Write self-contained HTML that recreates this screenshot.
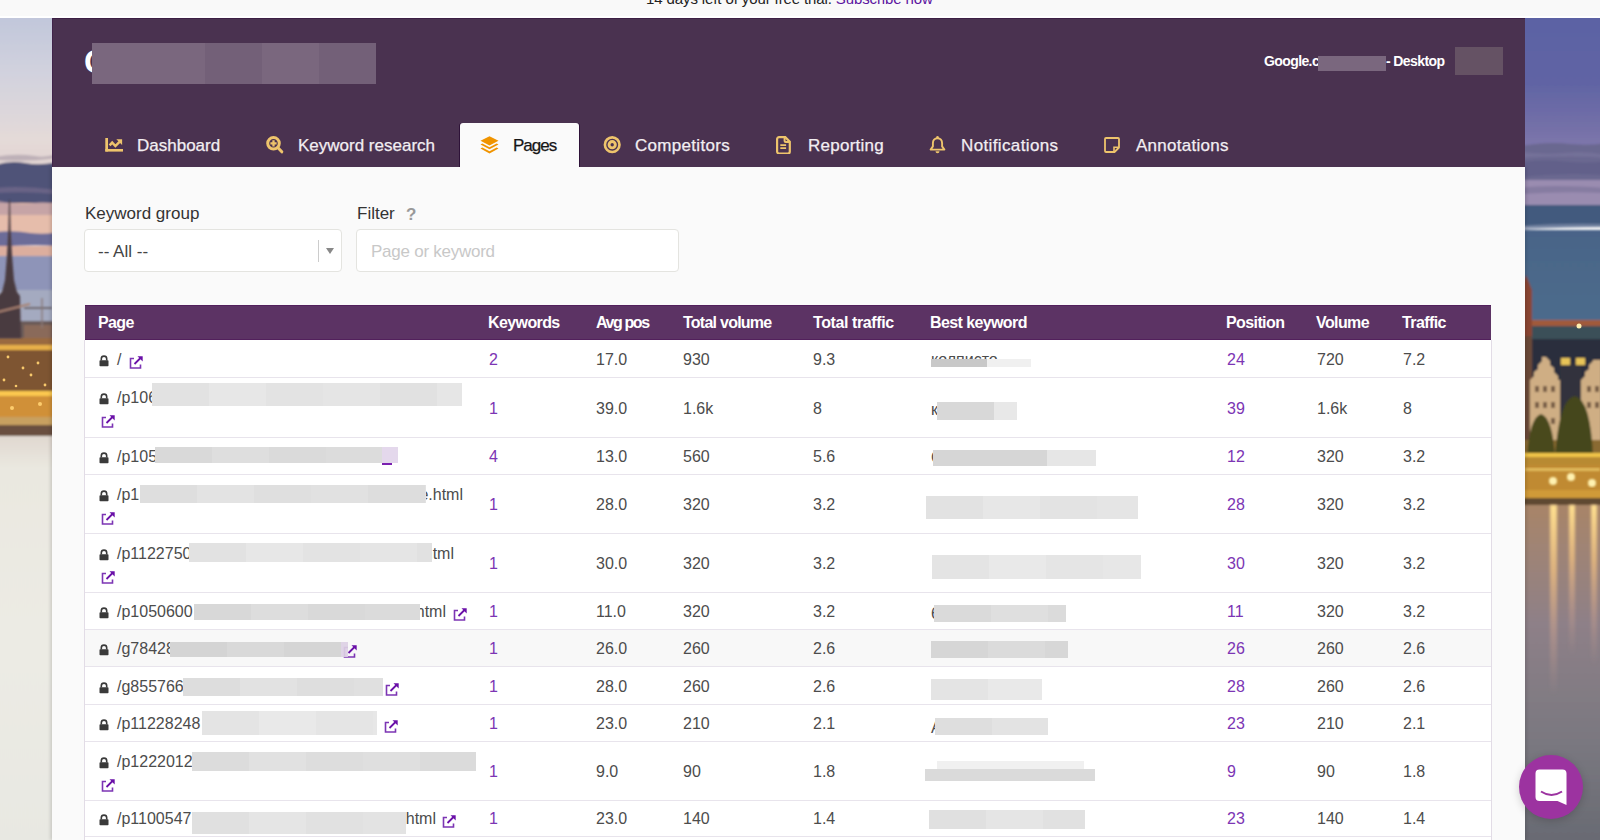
<!DOCTYPE html>
<html><head><meta charset="utf-8"><title>Pages</title>
<style>
html,body{margin:0;padding:0;}
body{width:1600px;height:840px;overflow:hidden;position:relative;background:#fafafa;font-family:"Liberation Sans", sans-serif;}
.t{position:absolute;white-space:nowrap;}
.r{position:absolute;}
</style></head><body>
<svg class="r" style="left:0;top:0" width="52" height="840" viewBox="0 0 52 840">
<defs>
<linearGradient id="lsky" x1="0" y1="0" x2="0" y2="1">
<stop offset="0" stop-color="#bcc4da"/><stop offset="0.45" stop-color="#d2d2de"/><stop offset="0.85" stop-color="#e4dad8"/><stop offset="1" stop-color="#e2d4d2"/>
</linearGradient>
<linearGradient id="lwater" x1="0" y1="0" x2="0" y2="1">
<stop offset="0" stop-color="#e0d8d0"/><stop offset="0.08" stop-color="#eae8e0"/><stop offset="0.5" stop-color="#ecebe4"/><stop offset="1" stop-color="#e8e8e2"/>
</linearGradient>
<filter id="lb" x="-20%" y="-5%" width="140%" height="110%"><feGaussianBlur stdDeviation="1.2"/></filter>
</defs>
<g filter="url(#lb)">
<rect x="-5" y="0" width="62" height="165" fill="url(#lsky)"/>
<path d="M-5 157 q20 -4 40 -1 q10 2 22 -2 v4 q-30 4 -62 2z" fill="#9a8c9c" opacity=".5"/>
<path d="M-5 165 q15 -5 30 -2 q15 3 32 -1 V205 q-20 4 -35 0 q-15 -3 -27 2z" fill="#505278"/>
<path d="M-5 188 q25 -3 62 2 v4 q-30 -3 -62 -1z" fill="#7a7090" opacity=".6"/>
<rect x="-5" y="203" width="62" height="32" fill="#e6bdab"/>
<path d="M-5 200 q20 6 40 3 q12 -2 22 2 v10 h-62z" fill="#b89aa4" opacity=".7"/>
<path d="M-5 232 q20 -2 35 1 q15 2 27 -1 V246 q-25 -2 -62 1z" fill="#6c6c98"/>
<rect x="-5" y="246" width="62" height="11" fill="#dcae9e"/>
<rect x="-5" y="256" width="62" height="66" fill="#8e94b8"/>
<rect x="-5" y="290" width="62" height="32" fill="#a4aac0"/>
<rect x="-5" y="321" width="62" height="18" fill="#6a5a58"/>
<rect x="24" y="325" width="28" height="14" fill="#8a6a5a"/>
<path d="M24 308 h28" stroke="#6a5e60" stroke-width="2"/>
<path d="M42 298 v30" stroke="#8a7a78" stroke-width="1.5"/>
<rect x="-5" y="338" width="62" height="8" fill="#9a6a40"/>
<rect x="-5" y="345" width="62" height="6" fill="#e8b048"/>
<rect x="-5" y="350" width="62" height="42" fill="#7e5432"/>
<rect x="-5" y="391" width="62" height="6" fill="#fcc850"/>
<rect x="-5" y="396" width="62" height="22" fill="#d09038"/>
<rect x="-5" y="417" width="62" height="9" fill="#c8a060"/>
<rect x="-5" y="425" width="62" height="12" fill="#6a5040"/>
<rect x="-5" y="436" width="62" height="410" fill="url(#lwater)"/>
</g>
<g filter="url(#lb)" opacity="1">
<path d="M9 200 L10 200 L10.6 230 L12 255 L14 280 L17 292 L20 296 L21 338 L-2 338 L-2 296 L2 292 L5 280 L7 255 L8.4 230z" fill="#4a3a40"/>
<path d="M-2 312 L30 304" stroke="#a88070" stroke-width="2"/>
</g>
<g fill="#ffd070" opacity=".95">
<circle cx="8" cy="357" r="1.4"/><circle cx="23" cy="368" r="1.4"/><circle cx="38" cy="363" r="1.4"/><circle cx="31" cy="375" r="1.4"/><circle cx="4" cy="380" r="1.4"/><circle cx="45" cy="385" r="1.4"/><circle cx="16" cy="386" r="1.3"/><circle cx="40" cy="404" r="2"/><circle cx="12" cy="408" r="2"/>
</g>
</svg>
<svg class="r" style="left:1525px;top:0" width="75" height="840" viewBox="0 0 75 840">
<defs>
<linearGradient id="rsky" x1="0" y1="0" x2="0" y2="1">
<stop offset="0" stop-color="#5a62a4"/><stop offset="0.55" stop-color="#6064a4"/><stop offset="0.85" stop-color="#7470a8"/><stop offset="1" stop-color="#8078ac"/>
</linearGradient>
<linearGradient id="rteal" x1="0" y1="0" x2="0" y2="1">
<stop offset="0" stop-color="#4a6488"/><stop offset="1" stop-color="#4c6c8c"/>
</linearGradient>
<linearGradient id="rwater" x1="0" y1="0" x2="0" y2="1">
<stop offset="0" stop-color="#a88468"/><stop offset="0.12" stop-color="#a08474"/><stop offset="0.35" stop-color="#8e8088"/><stop offset="0.7" stop-color="#7a7880"/><stop offset="1" stop-color="#686a72"/>
</linearGradient>
<linearGradient id="streak" x1="0" y1="0" x2="0" y2="1">
<stop offset="0" stop-color="#ffe090" stop-opacity="1"/><stop offset="0.35" stop-color="#f0c080" stop-opacity=".75"/><stop offset="0.7" stop-color="#d8a890" stop-opacity=".35"/><stop offset="1" stop-color="#c8a090" stop-opacity="0"/>
</linearGradient>
<filter id="rb" x="-20%" y="-5%" width="140%" height="110%"><feGaussianBlur stdDeviation="1.2"/></filter>
<filter id="rb2" x="-50%" y="-5%" width="200%" height="110%"><feGaussianBlur stdDeviation="1.8"/></filter>
</defs>
<g filter="url(#rb)">
<rect x="-5" y="0" width="85" height="150" fill="url(#rsky)"/>
<path d="M-5 146 q30 -5 50 -2 q20 2 35 -1 V182 h-85z" fill="#6a6890"/>
<path d="M-5 152 q25 3 45 1 q20 -2 40 2 v3 q-30 -3 -85 0z" fill="#7c78a0" opacity=".6"/>
<path d="M-5 162 q30 -3 50 0 q20 2 35 -1 v14 q-40 -3 -85 2z" fill="#605e88" opacity=".8"/>
<rect x="-5" y="180" width="85" height="26" fill="#9a8cb0"/>
<path d="M-5 188 q30 -4 85 0 v5 q-40 -2 -85 1z" fill="#7a7098" opacity=".6"/>
<rect x="-5" y="205" width="85" height="22" fill="#425a7e"/>
<path d="M-5 226 q40 -3 85 -2 v3 q-40 0 -85 3z" fill="#7a8aa8" opacity=".8"/>
<rect x="-5" y="230" width="85" height="92" fill="url(#rteal)"/>
<rect x="-5" y="320" width="85" height="7" fill="#a05a3a"/>
<rect x="-5" y="326" width="85" height="14" fill="#3a5058"/>
<rect x="-5" y="339" width="85" height="105" fill="#2a2e3c"/>
<path d="M-5 336 V290 l6 -15 l6 15 V336z" fill="#8a4430"/>
<rect x="-5" y="336" width="12" height="110" fill="#6a4838"/>
<path d="M5 440 V380 l4 -4 V372 l4 -3 V365 l4 -4 V357 h4 l4 4 V365 l4 3 V372 l4 4 V380 l2 0 V440z" fill="#cfae84"/>
<path d="M35 440 V362 h21 V440z" fill="#30323e"/>
<path d="M56 440 V380 l4 -4 V372 l4 -3 V365 l4 -4 V360 h8 V440z" fill="#cfae84"/>
<rect x="36" y="358" width="9" height="7" fill="#e8c458"/>
<rect x="51" y="358" width="9" height="7" fill="#e8c458"/>
<g fill="#5a4030" opacity=".75">
<rect x="10" y="386" width="4" height="6"/><rect x="18" y="386" width="4" height="6"/><rect x="26" y="386" width="4" height="6"/>
<rect x="10" y="402" width="4" height="6"/><rect x="18" y="402" width="4" height="6"/><rect x="26" y="402" width="4" height="6"/>
<rect x="10" y="418" width="4" height="6"/><rect x="18" y="418" width="4" height="6"/><rect x="26" y="418" width="4" height="6"/>
<rect x="62" y="386" width="4" height="6"/><rect x="70" y="386" width="4" height="6"/>
<rect x="62" y="402" width="4" height="6"/><rect x="70" y="402" width="4" height="6"/>
</g>
<rect x="-5" y="440" width="85" height="16" fill="#8a6a30"/>
<path d="M2 458 q2 -40 14 -44 q12 4 14 44z" fill="#4a4a1e"/>
<path d="M30 458 q4 -60 20 -62 q16 4 18 62z" fill="#44461c"/>
<rect x="-5" y="453" width="85" height="4" fill="#f0c448"/>
<rect x="-5" y="457" width="85" height="8" fill="#b88a30"/>
<rect x="-5" y="465" width="85" height="26" fill="#c08a30"/>
<rect x="-5" y="490" width="85" height="8" fill="#d09a38"/>
<rect x="-5" y="498" width="85" height="7" fill="#5e4a30"/>
<rect x="-5" y="505" width="85" height="340" fill="url(#rwater)"/>
</g>
<g fill="#fff2b0" filter="url(#rb)">
<circle cx="28" cy="481" r="4"/><circle cx="46" cy="477" r="4"/><circle cx="67" cy="483" r="4"/>
<rect x="0" y="468" width="75" height="3" fill="#f0d070" opacity=".7"/>
</g>
<g filter="url(#rb2)">
<rect x="25" y="505" width="7" height="190" fill="url(#streak)"/>
<rect x="44" y="505" width="6" height="150" fill="url(#streak)"/>
<rect x="66" y="505" width="6" height="160" fill="url(#streak)"/>

</g>
<circle cx="54" cy="326" r="2.5" fill="#fff0b0"/>

</svg>
<div class="r" style="left:0px;top:0px;width:1600px;height:18px;background:#f9f9f9;"></div>
<div class="r" style="left:0px;top:16px;width:1600px;height:2px;background:#ffffff;"></div>
<div class="t" style="left:646px;top:-9.00px;font-size:15px;line-height:15px;color:#222;font-weight:400;letter-spacing:-0.11px;">14 days left of your free trial. <span style="color:#5c14a0">Subscribe now</span></div>
<div class="r" style="left:52px;top:167px;width:1473px;height:673px;background:#fafafa;box-shadow:-2px 0 3px rgba(0,0,0,.12),2px 0 3px rgba(0,0,0,.12)"></div>
<div class="r" style="left:52px;top:18px;width:1473px;height:149px;background:#4a3250;"></div>
<div class="r" style="left:52px;top:18px;width:1473px;height:1px;background:#3c1f44;"></div>
<div class="r" style="left:52px;top:18px;width:1px;height:149px;background:#40234a;"></div>
<div class="t" style="left:84px;top:45.00px;font-size:33px;line-height:33px;color:#ffffff;font-weight:700;letter-spacing:0px;">C</div>
<div class="r" style="left:92px;top:43px;width:113px;height:41px;background:#7a677e;"></div>
<div class="r" style="left:205px;top:43px;width:57px;height:41px;background:#736078;"></div>
<div class="r" style="left:262px;top:43px;width:57px;height:41px;background:#7a677e;"></div>
<div class="r" style="left:319px;top:43px;width:57px;height:41px;background:#736078;"></div>
<div class="t" style="left:1264px;top:54.00px;font-size:14px;line-height:14px;color:#ffffff;font-weight:700;letter-spacing:-0.6px;">Google.c</div>
<div class="r" style="left:1318px;top:56px;width:68px;height:15px;background:#7a677e;"></div>
<div class="t" style="left:1386px;top:54.00px;font-size:14px;line-height:14px;color:#ffffff;font-weight:700;letter-spacing:-0.6px;">- Desktop</div>
<div class="r" style="left:1455px;top:47px;width:48px;height:28px;background:#655264;"></div>
<div class="r" style="left:460px;top:123px;width:119px;height:44px;background:#fafafa;border-radius:3px 3px 0 0;box-shadow:-1px 0 0 #2e1238,1px 0 0 #2e1238"></div>
<svg class="r" style="left:105px;top:138px" width="19" height="14" viewBox="0 0 19 14"><rect x="0.3" y="0" width="2.7" height="13.5" fill="#eec46c"/><rect x="0.3" y="11" width="17.7" height="2.6" fill="#eec46c"/><path d="M4.6 7.4L7.2 4.6 10.4 8 14.5 3.8" fill="none" stroke="#eec46c" stroke-width="2.5"/><path d="M11.3 1.2h5.8v5.8z" fill="#eec46c"/></svg>
<div class="t" style="left:137px;top:137.00px;font-size:17px;line-height:17px;color:#f2eef2;font-weight:400;letter-spacing:0px;-webkit-text-stroke:0.25px currentColor;">Dashboard</div>
<svg class="r" style="left:265px;top:136px" width="20" height="18" viewBox="0 0 20 18"><circle cx="8.5" cy="7.3" r="5.8" fill="none" stroke="#eec46c" stroke-width="3"/><path d="M5.4 7.3h6.2M8.5 4.2v6.2" stroke="#eec46c" stroke-width="2.3"/><path d="M13.2 12l3.6 3.8" stroke="#eec46c" stroke-width="3" stroke-linecap="round"/></svg>
<div class="t" style="left:298px;top:137.00px;font-size:17px;line-height:17px;color:#f2eef2;font-weight:400;letter-spacing:0px;-webkit-text-stroke:0.25px currentColor;">Keyword research</div>
<svg class="r" style="left:480px;top:136px" width="19" height="18" viewBox="0 0 19 18"><path d="M9.5 0.3L18.5 4.8 9.5 9.4 0.5 4.8z" fill="#f09400"/><path d="M2.3 7.6L9.5 11.3 16.7 7.6 18.5 8.6 9.5 13.3 0.5 8.6z" fill="#f09400"/><path d="M2.3 11.6L9.5 15.3 16.7 11.6 18.5 12.6 9.5 17.4 0.5 12.6z" fill="#f09400"/></svg>
<div class="t" style="left:513px;top:137.00px;font-size:17px;line-height:17px;color:#161616;font-weight:400;letter-spacing:-1.0px;-webkit-text-stroke:0.25px currentColor;">Pages</div>
<svg class="r" style="left:603px;top:136px" width="18" height="18" viewBox="0 0 18 18"><circle cx="9.2" cy="8.7" r="7.3" fill="none" stroke="#eec46c" stroke-width="2.6"/><circle cx="9.2" cy="8.7" r="3.15" fill="none" stroke="#eec46c" stroke-width="2.9"/></svg>
<div class="t" style="left:635px;top:137.00px;font-size:17px;line-height:17px;color:#f2eef2;font-weight:400;letter-spacing:0.3px;-webkit-text-stroke:0.25px currentColor;">Competitors</div>
<svg class="r" style="left:776px;top:136px" width="15" height="18" viewBox="0 0 15 18"><path d="M3.1 1.1h6.2l4.5 4.5v10a2 2 0 0 1-2 2H3.1a2 2 0 0 1-2-2V3.1a2 2 0 0 1 2-2z" fill="none" stroke="#eec46c" stroke-width="2.2"/><path d="M8.6 1.5v3.6a1 1 0 0 0 1 1h3.8" fill="none" stroke="#eec46c" stroke-width="2"/><path d="M4.3 9.2h5.8M4.3 12.2h5.8" stroke="#eec46c" stroke-width="1.8"/></svg>
<div class="t" style="left:808px;top:137.00px;font-size:17px;line-height:17px;color:#f2eef2;font-weight:400;letter-spacing:0.25px;-webkit-text-stroke:0.25px currentColor;">Reporting</div>
<svg class="r" style="left:929px;top:136px" width="17" height="18" viewBox="0 0 17 18"><path d="M8.5 2.2c-3 0-4.6 2.4-4.6 5v3.2L1.6 13.6h13.8L13.1 10.4V7.2c0-2.6-1.6-5-4.6-5z" fill="none" stroke="#eec46c" stroke-width="1.9" stroke-linejoin="round"/><circle cx="8.5" cy="1.4" r="1.3" fill="#eec46c"/><path d="M6.5 15.2a2 2 0 0 0 4 0z" fill="#eec46c"/></svg>
<div class="t" style="left:961px;top:137.00px;font-size:17px;line-height:17px;color:#f2eef2;font-weight:400;letter-spacing:0.37px;-webkit-text-stroke:0.25px currentColor;">Notifications</div>
<svg class="r" style="left:1104px;top:137px" width="16" height="16" viewBox="0 0 16 16"><path d="M2 1h12a1 1 0 0 1 1 1v8.5L10.5 15H2a1 1 0 0 1-1-1V2a1 1 0 0 1 1-1z" fill="none" stroke="#eec46c" stroke-width="1.8" stroke-linejoin="round"/><path d="M10 15v-4.8h5" fill="none" stroke="#eec46c" stroke-width="1.6"/></svg>
<div class="t" style="left:1136px;top:137.00px;font-size:17px;line-height:17px;color:#f2eef2;font-weight:400;letter-spacing:0.26px;-webkit-text-stroke:0.25px currentColor;">Annotations</div>
<div class="t" style="left:85px;top:205.00px;font-size:17px;line-height:17px;color:#333;font-weight:400;letter-spacing:0px;">Keyword group</div>
<div class="t" style="left:357px;top:205.00px;font-size:17px;line-height:17px;color:#333;font-weight:400;letter-spacing:0px;">Filter</div>
<div class="t" style="left:406px;top:206.00px;font-size:17px;line-height:17px;color:#999;font-weight:700;letter-spacing:0px;">?</div>
<div class="r" style="left:84px;top:229px;width:256px;height:41px;background:#fff;border:1px solid #e4e4e0;border-radius:4px"></div>
<div class="t" style="left:98px;top:243.00px;font-size:17px;line-height:17px;color:#444;font-weight:400;letter-spacing:0px;">-- All --</div>
<div class="r" style="left:318px;top:240px;width:1px;height:22px;background:#cccccc;"></div>
<svg class="r" style="left:326px;top:248px" width="8" height="6" viewBox="0 0 8 6"><path d="M0 0h8L4 6z" fill="#888"/></svg>
<div class="r" style="left:356px;top:229px;width:321px;height:41px;background:#fff;border:1px solid #e4e4e0;border-radius:4px"></div>
<div class="t" style="left:371px;top:243.00px;font-size:17px;line-height:17px;color:#c8c8c8;font-weight:400;letter-spacing:-0.25px;">Page or keyword</div>
<div class="r" style="left:85px;top:305px;width:1406px;height:35px;background:#5c3364;"></div>
<div class="r" style="left:85px;top:305px;width:1406px;height:1px;background:#52205c;"></div>
<div class="r" style="left:85px;top:339px;width:1406px;height:1px;background:#52205c;"></div>
<div class="t" style="left:98px;top:314.50px;font-size:16px;line-height:16px;color:#ffffff;font-weight:700;letter-spacing:-0.6px;">Page</div>
<div class="t" style="left:488px;top:314.50px;font-size:16px;line-height:16px;color:#ffffff;font-weight:700;letter-spacing:-0.6px;">Keywords</div>
<div class="t" style="left:596px;top:314.50px;font-size:16px;line-height:16px;color:#ffffff;font-weight:700;letter-spacing:-1.4px;">Avg pos</div>
<div class="t" style="left:683px;top:314.50px;font-size:16px;line-height:16px;color:#ffffff;font-weight:700;letter-spacing:-0.75px;">Total volume</div>
<div class="t" style="left:813px;top:314.50px;font-size:16px;line-height:16px;color:#ffffff;font-weight:700;letter-spacing:-0.4px;">Total traffic</div>
<div class="t" style="left:930px;top:314.50px;font-size:16px;line-height:16px;color:#ffffff;font-weight:700;letter-spacing:-0.6px;">Best keyword</div>
<div class="t" style="left:1226px;top:314.50px;font-size:16px;line-height:16px;color:#ffffff;font-weight:700;letter-spacing:-0.6px;">Position</div>
<div class="t" style="left:1316px;top:314.50px;font-size:16px;line-height:16px;color:#ffffff;font-weight:700;letter-spacing:-0.6px;">Volume</div>
<div class="t" style="left:1402px;top:314.50px;font-size:16px;line-height:16px;color:#ffffff;font-weight:700;letter-spacing:-0.6px;">Traffic</div>
<div class="r" style="left:84px;top:340px;width:1px;height:500px;background:#e2dce6;"></div>
<div class="r" style="left:1491px;top:340px;width:1px;height:500px;background:#e2dce6;"></div>
<div class="r" style="left:85px;top:340px;width:1406px;height:500px;background:#ffffff;"></div>
<div class="r" style="left:85px;top:629px;width:1406px;height:37px;background:#f8f8f8;"></div>
<div class="r" style="left:85px;top:377px;width:1406px;height:1px;background:#e8e4ec;"></div>
<div class="r" style="left:85px;top:437px;width:1406px;height:1px;background:#e8e4ec;"></div>
<div class="r" style="left:85px;top:474px;width:1406px;height:1px;background:#e8e4ec;"></div>
<div class="r" style="left:85px;top:533px;width:1406px;height:1px;background:#e8e4ec;"></div>
<div class="r" style="left:85px;top:592px;width:1406px;height:1px;background:#e8e4ec;"></div>
<div class="r" style="left:85px;top:629px;width:1406px;height:1px;background:#e8e4ec;"></div>
<div class="r" style="left:85px;top:666px;width:1406px;height:1px;background:#e8e4ec;"></div>
<div class="r" style="left:85px;top:704px;width:1406px;height:1px;background:#e8e4ec;"></div>
<div class="r" style="left:85px;top:741px;width:1406px;height:1px;background:#e8e4ec;"></div>
<div class="r" style="left:85px;top:800px;width:1406px;height:1px;background:#e8e4ec;"></div>
<div class="r" style="left:85px;top:836px;width:1406px;height:1px;background:#e8e4ec;"></div>
<div class="t" style="left:489px;top:351.50px;font-size:16px;line-height:16px;color:#7c35b4;font-weight:400;letter-spacing:0px;">2</div>
<div class="t" style="left:596px;top:351.50px;font-size:16px;line-height:16px;color:#4c4c4c;font-weight:400;letter-spacing:0px;">17.0</div>
<div class="t" style="left:683px;top:351.50px;font-size:16px;line-height:16px;color:#4c4c4c;font-weight:400;letter-spacing:0px;">930</div>
<div class="t" style="left:813px;top:351.50px;font-size:16px;line-height:16px;color:#4c4c4c;font-weight:400;letter-spacing:0px;">9.3</div>
<div class="t" style="left:1227px;top:351.50px;font-size:16px;line-height:16px;color:#7c35b4;font-weight:400;letter-spacing:0px;">24</div>
<div class="t" style="left:1317px;top:351.50px;font-size:16px;line-height:16px;color:#4c4c4c;font-weight:400;letter-spacing:0px;">720</div>
<div class="t" style="left:1403px;top:351.50px;font-size:16px;line-height:16px;color:#4c4c4c;font-weight:400;letter-spacing:0px;">7.2</div>
<div class="t" style="left:489px;top:400.50px;font-size:16px;line-height:16px;color:#7c35b4;font-weight:400;letter-spacing:0px;">1</div>
<div class="t" style="left:596px;top:400.50px;font-size:16px;line-height:16px;color:#4c4c4c;font-weight:400;letter-spacing:0px;">39.0</div>
<div class="t" style="left:683px;top:400.50px;font-size:16px;line-height:16px;color:#4c4c4c;font-weight:400;letter-spacing:0px;">1.6k</div>
<div class="t" style="left:813px;top:400.50px;font-size:16px;line-height:16px;color:#4c4c4c;font-weight:400;letter-spacing:0px;">8</div>
<div class="t" style="left:1227px;top:400.50px;font-size:16px;line-height:16px;color:#7c35b4;font-weight:400;letter-spacing:0px;">39</div>
<div class="t" style="left:1317px;top:400.50px;font-size:16px;line-height:16px;color:#4c4c4c;font-weight:400;letter-spacing:0px;">1.6k</div>
<div class="t" style="left:1403px;top:400.50px;font-size:16px;line-height:16px;color:#4c4c4c;font-weight:400;letter-spacing:0px;">8</div>
<div class="t" style="left:489px;top:448.50px;font-size:16px;line-height:16px;color:#7c35b4;font-weight:400;letter-spacing:0px;">4</div>
<div class="t" style="left:596px;top:448.50px;font-size:16px;line-height:16px;color:#4c4c4c;font-weight:400;letter-spacing:0px;">13.0</div>
<div class="t" style="left:683px;top:448.50px;font-size:16px;line-height:16px;color:#4c4c4c;font-weight:400;letter-spacing:0px;">560</div>
<div class="t" style="left:813px;top:448.50px;font-size:16px;line-height:16px;color:#4c4c4c;font-weight:400;letter-spacing:0px;">5.6</div>
<div class="t" style="left:1227px;top:448.50px;font-size:16px;line-height:16px;color:#7c35b4;font-weight:400;letter-spacing:0px;">12</div>
<div class="t" style="left:1317px;top:448.50px;font-size:16px;line-height:16px;color:#4c4c4c;font-weight:400;letter-spacing:0px;">320</div>
<div class="t" style="left:1403px;top:448.50px;font-size:16px;line-height:16px;color:#4c4c4c;font-weight:400;letter-spacing:0px;">3.2</div>
<div class="t" style="left:489px;top:496.50px;font-size:16px;line-height:16px;color:#7c35b4;font-weight:400;letter-spacing:0px;">1</div>
<div class="t" style="left:596px;top:496.50px;font-size:16px;line-height:16px;color:#4c4c4c;font-weight:400;letter-spacing:0px;">28.0</div>
<div class="t" style="left:683px;top:496.50px;font-size:16px;line-height:16px;color:#4c4c4c;font-weight:400;letter-spacing:0px;">320</div>
<div class="t" style="left:813px;top:496.50px;font-size:16px;line-height:16px;color:#4c4c4c;font-weight:400;letter-spacing:0px;">3.2</div>
<div class="t" style="left:1227px;top:496.50px;font-size:16px;line-height:16px;color:#7c35b4;font-weight:400;letter-spacing:0px;">28</div>
<div class="t" style="left:1317px;top:496.50px;font-size:16px;line-height:16px;color:#4c4c4c;font-weight:400;letter-spacing:0px;">320</div>
<div class="t" style="left:1403px;top:496.50px;font-size:16px;line-height:16px;color:#4c4c4c;font-weight:400;letter-spacing:0px;">3.2</div>
<div class="t" style="left:489px;top:555.50px;font-size:16px;line-height:16px;color:#7c35b4;font-weight:400;letter-spacing:0px;">1</div>
<div class="t" style="left:596px;top:555.50px;font-size:16px;line-height:16px;color:#4c4c4c;font-weight:400;letter-spacing:0px;">30.0</div>
<div class="t" style="left:683px;top:555.50px;font-size:16px;line-height:16px;color:#4c4c4c;font-weight:400;letter-spacing:0px;">320</div>
<div class="t" style="left:813px;top:555.50px;font-size:16px;line-height:16px;color:#4c4c4c;font-weight:400;letter-spacing:0px;">3.2</div>
<div class="t" style="left:1227px;top:555.50px;font-size:16px;line-height:16px;color:#7c35b4;font-weight:400;letter-spacing:0px;">30</div>
<div class="t" style="left:1317px;top:555.50px;font-size:16px;line-height:16px;color:#4c4c4c;font-weight:400;letter-spacing:0px;">320</div>
<div class="t" style="left:1403px;top:555.50px;font-size:16px;line-height:16px;color:#4c4c4c;font-weight:400;letter-spacing:0px;">3.2</div>
<div class="t" style="left:489px;top:603.50px;font-size:16px;line-height:16px;color:#7c35b4;font-weight:400;letter-spacing:0px;">1</div>
<div class="t" style="left:596px;top:603.50px;font-size:16px;line-height:16px;color:#4c4c4c;font-weight:400;letter-spacing:0px;">11.0</div>
<div class="t" style="left:683px;top:603.50px;font-size:16px;line-height:16px;color:#4c4c4c;font-weight:400;letter-spacing:0px;">320</div>
<div class="t" style="left:813px;top:603.50px;font-size:16px;line-height:16px;color:#4c4c4c;font-weight:400;letter-spacing:0px;">3.2</div>
<div class="t" style="left:1227px;top:603.50px;font-size:16px;line-height:16px;color:#7c35b4;font-weight:400;letter-spacing:0px;">11</div>
<div class="t" style="left:1317px;top:603.50px;font-size:16px;line-height:16px;color:#4c4c4c;font-weight:400;letter-spacing:0px;">320</div>
<div class="t" style="left:1403px;top:603.50px;font-size:16px;line-height:16px;color:#4c4c4c;font-weight:400;letter-spacing:0px;">3.2</div>
<div class="t" style="left:489px;top:640.50px;font-size:16px;line-height:16px;color:#7c35b4;font-weight:400;letter-spacing:0px;">1</div>
<div class="t" style="left:596px;top:640.50px;font-size:16px;line-height:16px;color:#4c4c4c;font-weight:400;letter-spacing:0px;">26.0</div>
<div class="t" style="left:683px;top:640.50px;font-size:16px;line-height:16px;color:#4c4c4c;font-weight:400;letter-spacing:0px;">260</div>
<div class="t" style="left:813px;top:640.50px;font-size:16px;line-height:16px;color:#4c4c4c;font-weight:400;letter-spacing:0px;">2.6</div>
<div class="t" style="left:1227px;top:640.50px;font-size:16px;line-height:16px;color:#7c35b4;font-weight:400;letter-spacing:0px;">26</div>
<div class="t" style="left:1317px;top:640.50px;font-size:16px;line-height:16px;color:#4c4c4c;font-weight:400;letter-spacing:0px;">260</div>
<div class="t" style="left:1403px;top:640.50px;font-size:16px;line-height:16px;color:#4c4c4c;font-weight:400;letter-spacing:0px;">2.6</div>
<div class="t" style="left:489px;top:678.50px;font-size:16px;line-height:16px;color:#7c35b4;font-weight:400;letter-spacing:0px;">1</div>
<div class="t" style="left:596px;top:678.50px;font-size:16px;line-height:16px;color:#4c4c4c;font-weight:400;letter-spacing:0px;">28.0</div>
<div class="t" style="left:683px;top:678.50px;font-size:16px;line-height:16px;color:#4c4c4c;font-weight:400;letter-spacing:0px;">260</div>
<div class="t" style="left:813px;top:678.50px;font-size:16px;line-height:16px;color:#4c4c4c;font-weight:400;letter-spacing:0px;">2.6</div>
<div class="t" style="left:1227px;top:678.50px;font-size:16px;line-height:16px;color:#7c35b4;font-weight:400;letter-spacing:0px;">28</div>
<div class="t" style="left:1317px;top:678.50px;font-size:16px;line-height:16px;color:#4c4c4c;font-weight:400;letter-spacing:0px;">260</div>
<div class="t" style="left:1403px;top:678.50px;font-size:16px;line-height:16px;color:#4c4c4c;font-weight:400;letter-spacing:0px;">2.6</div>
<div class="t" style="left:489px;top:715.50px;font-size:16px;line-height:16px;color:#7c35b4;font-weight:400;letter-spacing:0px;">1</div>
<div class="t" style="left:596px;top:715.50px;font-size:16px;line-height:16px;color:#4c4c4c;font-weight:400;letter-spacing:0px;">23.0</div>
<div class="t" style="left:683px;top:715.50px;font-size:16px;line-height:16px;color:#4c4c4c;font-weight:400;letter-spacing:0px;">210</div>
<div class="t" style="left:813px;top:715.50px;font-size:16px;line-height:16px;color:#4c4c4c;font-weight:400;letter-spacing:0px;">2.1</div>
<div class="t" style="left:1227px;top:715.50px;font-size:16px;line-height:16px;color:#7c35b4;font-weight:400;letter-spacing:0px;">23</div>
<div class="t" style="left:1317px;top:715.50px;font-size:16px;line-height:16px;color:#4c4c4c;font-weight:400;letter-spacing:0px;">210</div>
<div class="t" style="left:1403px;top:715.50px;font-size:16px;line-height:16px;color:#4c4c4c;font-weight:400;letter-spacing:0px;">2.1</div>
<div class="t" style="left:489px;top:763.50px;font-size:16px;line-height:16px;color:#7c35b4;font-weight:400;letter-spacing:0px;">1</div>
<div class="t" style="left:596px;top:763.50px;font-size:16px;line-height:16px;color:#4c4c4c;font-weight:400;letter-spacing:0px;">9.0</div>
<div class="t" style="left:683px;top:763.50px;font-size:16px;line-height:16px;color:#4c4c4c;font-weight:400;letter-spacing:0px;">90</div>
<div class="t" style="left:813px;top:763.50px;font-size:16px;line-height:16px;color:#4c4c4c;font-weight:400;letter-spacing:0px;">1.8</div>
<div class="t" style="left:1227px;top:763.50px;font-size:16px;line-height:16px;color:#7c35b4;font-weight:400;letter-spacing:0px;">9</div>
<div class="t" style="left:1317px;top:763.50px;font-size:16px;line-height:16px;color:#4c4c4c;font-weight:400;letter-spacing:0px;">90</div>
<div class="t" style="left:1403px;top:763.50px;font-size:16px;line-height:16px;color:#4c4c4c;font-weight:400;letter-spacing:0px;">1.8</div>
<div class="t" style="left:489px;top:810.50px;font-size:16px;line-height:16px;color:#7c35b4;font-weight:400;letter-spacing:0px;">1</div>
<div class="t" style="left:596px;top:810.50px;font-size:16px;line-height:16px;color:#4c4c4c;font-weight:400;letter-spacing:0px;">23.0</div>
<div class="t" style="left:683px;top:810.50px;font-size:16px;line-height:16px;color:#4c4c4c;font-weight:400;letter-spacing:0px;">140</div>
<div class="t" style="left:813px;top:810.50px;font-size:16px;line-height:16px;color:#4c4c4c;font-weight:400;letter-spacing:0px;">1.4</div>
<div class="t" style="left:1227px;top:810.50px;font-size:16px;line-height:16px;color:#7c35b4;font-weight:400;letter-spacing:0px;">23</div>
<div class="t" style="left:1317px;top:810.50px;font-size:16px;line-height:16px;color:#4c4c4c;font-weight:400;letter-spacing:0px;">140</div>
<div class="t" style="left:1403px;top:810.50px;font-size:16px;line-height:16px;color:#4c4c4c;font-weight:400;letter-spacing:0px;">1.4</div>
<svg class="r" style="left:99px;top:355px" width="10" height="12" viewBox="0 0 10 12"><path d="M2.3 5.5V3.8a2.7 2.7 0 0 1 5.4 0v1.7" fill="none" stroke="#3a3a3a" stroke-width="1.6"/><rect x="0.5" y="5.2" width="9" height="6" rx="0.8" fill="#3a3a3a"/></svg>
<div class="t" style="left:117px;top:351.50px;font-size:16px;line-height:16px;color:#4c4c4c;font-weight:400;letter-spacing:0px;">/</div>
<svg class="r" style="left:129px;top:356px" width="14" height="13" viewBox="0 0 14 13"><path d="M5 2.5H1.5v9.5h10V8.5" fill="none" stroke="#7c35b4" stroke-width="1.6"/><path d="M5.5 8L12 1.5" stroke="#6a10a8" stroke-width="1.8"/><path d="M8.5 0.3h5.2v5.2z" fill="#6a10a8"/></svg>
<svg class="r" style="left:99px;top:393px" width="10" height="12" viewBox="0 0 10 12"><path d="M2.3 5.5V3.8a2.7 2.7 0 0 1 5.4 0v1.7" fill="none" stroke="#3a3a3a" stroke-width="1.6"/><rect x="0.5" y="5.2" width="9" height="6" rx="0.8" fill="#3a3a3a"/></svg>
<div class="t" style="left:117px;top:389.50px;font-size:16px;line-height:16px;color:#4c4c4c;font-weight:400;letter-spacing:0px;">/p106</div>
<div class="r" style="left:152px;top:383px;width:57px;height:23px;background:#e2e2e2;"></div><div class="r" style="left:209px;top:383px;width:57px;height:23px;background:#e7e7e7;"></div><div class="r" style="left:266px;top:383px;width:57px;height:23px;background:#e3e3e3;"></div><div class="r" style="left:323px;top:383px;width:57px;height:23px;background:#e5e5e5;"></div><div class="r" style="left:380px;top:383px;width:57px;height:23px;background:#e1e1e1;"></div><div class="r" style="left:437px;top:383px;width:25px;height:23px;background:#e6e6e6;"></div>
<svg class="r" style="left:101px;top:415px" width="14" height="13" viewBox="0 0 14 13"><path d="M5 2.5H1.5v9.5h10V8.5" fill="none" stroke="#7c35b4" stroke-width="1.6"/><path d="M5.5 8L12 1.5" stroke="#6a10a8" stroke-width="1.8"/><path d="M8.5 0.3h5.2v5.2z" fill="#6a10a8"/></svg>
<svg class="r" style="left:99px;top:452px" width="10" height="12" viewBox="0 0 10 12"><path d="M2.3 5.5V3.8a2.7 2.7 0 0 1 5.4 0v1.7" fill="none" stroke="#3a3a3a" stroke-width="1.6"/><rect x="0.5" y="5.2" width="9" height="6" rx="0.8" fill="#3a3a3a"/></svg>
<div class="t" style="left:117px;top:448.50px;font-size:16px;line-height:16px;color:#4c4c4c;font-weight:400;letter-spacing:0px;">/p105</div>
<div class="r" style="left:155px;top:447px;width:57px;height:16px;background:#d9d9d9;"></div><div class="r" style="left:212px;top:447px;width:57px;height:16px;background:#dedede;"></div><div class="r" style="left:269px;top:447px;width:57px;height:16px;background:#dadada;"></div><div class="r" style="left:326px;top:447px;width:56px;height:16px;background:#dcdcdc;"></div>
<div class="r" style="left:382px;top:447px;width:16px;height:16px;background:#e4d8ec;"></div>
<div class="r" style="left:382px;top:463px;width:10px;height:2px;background:#7a20b0;"></div>
<svg class="r" style="left:99px;top:490px" width="10" height="12" viewBox="0 0 10 12"><path d="M2.3 5.5V3.8a2.7 2.7 0 0 1 5.4 0v1.7" fill="none" stroke="#3a3a3a" stroke-width="1.6"/><rect x="0.5" y="5.2" width="9" height="6" rx="0.8" fill="#3a3a3a"/></svg>
<div class="t" style="left:117px;top:486.50px;font-size:16px;line-height:16px;color:#4c4c4c;font-weight:400;letter-spacing:0px;">/p1</div>
<div class="t" style="right:1137px;top:486.50px;font-size:16px;line-height:16px;color:#4c4c4c;font-weight:400;letter-spacing:0px;">e.html</div>
<div class="r" style="left:140px;top:485px;width:57px;height:18px;background:#dedede;"></div><div class="r" style="left:197px;top:485px;width:57px;height:18px;background:#e3e3e3;"></div><div class="r" style="left:254px;top:485px;width:57px;height:18px;background:#dfdfdf;"></div><div class="r" style="left:311px;top:485px;width:57px;height:18px;background:#e1e1e1;"></div><div class="r" style="left:368px;top:485px;width:57px;height:18px;background:#dddddd;"></div><div class="r" style="left:425px;top:485px;width:1px;height:18px;background:#e2e2e2;"></div>
<svg class="r" style="left:101px;top:512px" width="14" height="13" viewBox="0 0 14 13"><path d="M5 2.5H1.5v9.5h10V8.5" fill="none" stroke="#7c35b4" stroke-width="1.6"/><path d="M5.5 8L12 1.5" stroke="#6a10a8" stroke-width="1.8"/><path d="M8.5 0.3h5.2v5.2z" fill="#6a10a8"/></svg>
<svg class="r" style="left:99px;top:549px" width="10" height="12" viewBox="0 0 10 12"><path d="M2.3 5.5V3.8a2.7 2.7 0 0 1 5.4 0v1.7" fill="none" stroke="#3a3a3a" stroke-width="1.6"/><rect x="0.5" y="5.2" width="9" height="6" rx="0.8" fill="#3a3a3a"/></svg>
<div class="t" style="left:117px;top:545.50px;font-size:16px;line-height:16px;color:#4c4c4c;font-weight:400;letter-spacing:0px;">/p1122750</div>
<div class="t" style="right:1146px;top:545.50px;font-size:16px;line-height:16px;color:#4c4c4c;font-weight:400;letter-spacing:0px;">html</div>
<div class="r" style="left:189px;top:543px;width:57px;height:19px;background:#e2e2e2;"></div><div class="r" style="left:246px;top:543px;width:57px;height:19px;background:#e7e7e7;"></div><div class="r" style="left:303px;top:543px;width:57px;height:19px;background:#e3e3e3;"></div><div class="r" style="left:360px;top:543px;width:57px;height:19px;background:#e5e5e5;"></div><div class="r" style="left:417px;top:543px;width:15px;height:19px;background:#e1e1e1;"></div>
<svg class="r" style="left:101px;top:571px" width="14" height="13" viewBox="0 0 14 13"><path d="M5 2.5H1.5v9.5h10V8.5" fill="none" stroke="#7c35b4" stroke-width="1.6"/><path d="M5.5 8L12 1.5" stroke="#6a10a8" stroke-width="1.8"/><path d="M8.5 0.3h5.2v5.2z" fill="#6a10a8"/></svg>
<svg class="r" style="left:99px;top:607px" width="10" height="12" viewBox="0 0 10 12"><path d="M2.3 5.5V3.8a2.7 2.7 0 0 1 5.4 0v1.7" fill="none" stroke="#3a3a3a" stroke-width="1.6"/><rect x="0.5" y="5.2" width="9" height="6" rx="0.8" fill="#3a3a3a"/></svg>
<div class="t" style="left:117px;top:603.50px;font-size:16px;line-height:16px;color:#4c4c4c;font-weight:400;letter-spacing:0px;">/p1050600</div>
<div class="t" style="right:1154px;top:603.50px;font-size:16px;line-height:16px;color:#4c4c4c;font-weight:400;letter-spacing:0px;">html</div>
<div class="r" style="left:194px;top:604px;width:57px;height:16px;background:#d8d8d8;"></div><div class="r" style="left:251px;top:604px;width:57px;height:16px;background:#dddddd;"></div><div class="r" style="left:308px;top:604px;width:57px;height:16px;background:#d9d9d9;"></div><div class="r" style="left:365px;top:604px;width:55px;height:16px;background:#dbdbdb;"></div>
<svg class="r" style="left:453px;top:608px" width="14" height="13" viewBox="0 0 14 13"><path d="M5 2.5H1.5v9.5h10V8.5" fill="none" stroke="#7c35b4" stroke-width="1.6"/><path d="M5.5 8L12 1.5" stroke="#6a10a8" stroke-width="1.8"/><path d="M8.5 0.3h5.2v5.2z" fill="#6a10a8"/></svg>
<svg class="r" style="left:99px;top:644px" width="10" height="12" viewBox="0 0 10 12"><path d="M2.3 5.5V3.8a2.7 2.7 0 0 1 5.4 0v1.7" fill="none" stroke="#3a3a3a" stroke-width="1.6"/><rect x="0.5" y="5.2" width="9" height="6" rx="0.8" fill="#3a3a3a"/></svg>
<div class="t" style="left:117px;top:640.50px;font-size:16px;line-height:16px;color:#4c4c4c;font-weight:400;letter-spacing:0px;">/g78428</div>
<div class="r" style="left:170px;top:642px;width:57px;height:15px;background:#d4d4d4;"></div><div class="r" style="left:227px;top:642px;width:57px;height:15px;background:#d9d9d9;"></div><div class="r" style="left:284px;top:642px;width:57px;height:15px;background:#d5d5d5;"></div>
<svg class="r" style="left:343px;top:645px" width="14" height="13" viewBox="0 0 14 13"><path d="M5 2.5H1.5v9.5h10V8.5" fill="none" stroke="#7c35b4" stroke-width="1.6"/><path d="M5.5 8L12 1.5" stroke="#6a10a8" stroke-width="1.8"/><path d="M8.5 0.3h5.2v5.2z" fill="#6a10a8"/></svg>
<div class="r" style="left:341px;top:642px;width:7px;height:15px;background:#dcd0e4;opacity:.92"></div>
<svg class="r" style="left:99px;top:682px" width="10" height="12" viewBox="0 0 10 12"><path d="M2.3 5.5V3.8a2.7 2.7 0 0 1 5.4 0v1.7" fill="none" stroke="#3a3a3a" stroke-width="1.6"/><rect x="0.5" y="5.2" width="9" height="6" rx="0.8" fill="#3a3a3a"/></svg>
<div class="t" style="left:117px;top:678.50px;font-size:16px;line-height:16px;color:#4c4c4c;font-weight:400;letter-spacing:0px;">/g855766</div>
<div class="r" style="left:183px;top:678px;width:57px;height:18px;background:#dddddd;"></div><div class="r" style="left:240px;top:678px;width:57px;height:18px;background:#e2e2e2;"></div><div class="r" style="left:297px;top:678px;width:57px;height:18px;background:#dedede;"></div><div class="r" style="left:354px;top:678px;width:29px;height:18px;background:#e0e0e0;"></div>
<svg class="r" style="left:385px;top:683px" width="14" height="13" viewBox="0 0 14 13"><path d="M5 2.5H1.5v9.5h10V8.5" fill="none" stroke="#7c35b4" stroke-width="1.6"/><path d="M5.5 8L12 1.5" stroke="#6a10a8" stroke-width="1.8"/><path d="M8.5 0.3h5.2v5.2z" fill="#6a10a8"/></svg>
<svg class="r" style="left:99px;top:719px" width="10" height="12" viewBox="0 0 10 12"><path d="M2.3 5.5V3.8a2.7 2.7 0 0 1 5.4 0v1.7" fill="none" stroke="#3a3a3a" stroke-width="1.6"/><rect x="0.5" y="5.2" width="9" height="6" rx="0.8" fill="#3a3a3a"/></svg>
<div class="t" style="left:117px;top:715.50px;font-size:16px;line-height:16px;color:#4c4c4c;font-weight:400;letter-spacing:0px;">/p11228248</div>
<div class="r" style="left:202px;top:711px;width:57px;height:24px;background:#e4e4e4;"></div><div class="r" style="left:259px;top:711px;width:57px;height:24px;background:#e9e9e9;"></div><div class="r" style="left:316px;top:711px;width:57px;height:24px;background:#e5e5e5;"></div><div class="r" style="left:373px;top:711px;width:4px;height:24px;background:#e7e7e7;"></div>
<svg class="r" style="left:384px;top:720px" width="14" height="13" viewBox="0 0 14 13"><path d="M5 2.5H1.5v9.5h10V8.5" fill="none" stroke="#7c35b4" stroke-width="1.6"/><path d="M5.5 8L12 1.5" stroke="#6a10a8" stroke-width="1.8"/><path d="M8.5 0.3h5.2v5.2z" fill="#6a10a8"/></svg>
<svg class="r" style="left:99px;top:757px" width="10" height="12" viewBox="0 0 10 12"><path d="M2.3 5.5V3.8a2.7 2.7 0 0 1 5.4 0v1.7" fill="none" stroke="#3a3a3a" stroke-width="1.6"/><rect x="0.5" y="5.2" width="9" height="6" rx="0.8" fill="#3a3a3a"/></svg>
<div class="t" style="left:117px;top:753.50px;font-size:16px;line-height:16px;color:#4c4c4c;font-weight:400;letter-spacing:0px;">/p1222012</div>
<div class="r" style="left:192px;top:752px;width:57px;height:19px;background:#dcdcdc;"></div><div class="r" style="left:249px;top:752px;width:57px;height:19px;background:#e1e1e1;"></div><div class="r" style="left:306px;top:752px;width:57px;height:19px;background:#dddddd;"></div><div class="r" style="left:363px;top:752px;width:57px;height:19px;background:#dfdfdf;"></div><div class="r" style="left:420px;top:752px;width:56px;height:19px;background:#dbdbdb;"></div>
<svg class="r" style="left:101px;top:779px" width="14" height="13" viewBox="0 0 14 13"><path d="M5 2.5H1.5v9.5h10V8.5" fill="none" stroke="#7c35b4" stroke-width="1.6"/><path d="M5.5 8L12 1.5" stroke="#6a10a8" stroke-width="1.8"/><path d="M8.5 0.3h5.2v5.2z" fill="#6a10a8"/></svg>
<svg class="r" style="left:99px;top:814px" width="10" height="12" viewBox="0 0 10 12"><path d="M2.3 5.5V3.8a2.7 2.7 0 0 1 5.4 0v1.7" fill="none" stroke="#3a3a3a" stroke-width="1.6"/><rect x="0.5" y="5.2" width="9" height="6" rx="0.8" fill="#3a3a3a"/></svg>
<div class="t" style="left:117px;top:810.50px;font-size:16px;line-height:16px;color:#4c4c4c;font-weight:400;letter-spacing:0px;">/p1100547</div>
<div class="t" style="right:1164px;top:810.50px;font-size:16px;line-height:16px;color:#4c4c4c;font-weight:400;letter-spacing:0px;">html</div>
<div class="r" style="left:192px;top:812px;width:57px;height:22px;background:#e0e0e0;"></div><div class="r" style="left:249px;top:812px;width:57px;height:22px;background:#e5e5e5;"></div><div class="r" style="left:306px;top:812px;width:57px;height:22px;background:#e1e1e1;"></div><div class="r" style="left:363px;top:812px;width:43px;height:22px;background:#e3e3e3;"></div>
<svg class="r" style="left:442px;top:815px" width="14" height="13" viewBox="0 0 14 13"><path d="M5 2.5H1.5v9.5h10V8.5" fill="none" stroke="#7c35b4" stroke-width="1.6"/><path d="M5.5 8L12 1.5" stroke="#6a10a8" stroke-width="1.8"/><path d="M8.5 0.3h5.2v5.2z" fill="#6a10a8"/></svg>
<div class="t" style="left:931px;top:351.50px;font-size:16px;line-height:16px;color:#4c4c4c;font-weight:400;letter-spacing:0px;">колписто</div>
<div class="t" style="left:931px;top:401.50px;font-size:16px;line-height:16px;color:#4c4c4c;font-weight:400;letter-spacing:0px;">к</div>
<div class="t" style="left:931px;top:449.50px;font-size:16px;line-height:16px;color:#4c4c4c;font-weight:400;letter-spacing:0px;">С</div>
<div class="t" style="left:931px;top:605.50px;font-size:16px;line-height:16px;color:#4c4c4c;font-weight:400;letter-spacing:0px;">6</div>
<div class="t" style="left:931px;top:719.50px;font-size:16px;line-height:16px;color:#4c4c4c;font-weight:400;letter-spacing:0px;">А</div>
<div class="r" style="left:931px;top:359px;width:56px;height:8px;background:#c8c8c8;"></div>
<div class="r" style="left:987px;top:359px;width:44px;height:8px;background:#f0f0f0;"></div>
<div class="r" style="left:937px;top:402px;width:57px;height:18px;background:#d8d8d8;"></div>
<div class="r" style="left:994px;top:402px;width:23px;height:18px;background:#e8e8e8;"></div>
<div class="r" style="left:933px;top:450px;width:114px;height:16px;background:#d6d6d6;"></div>
<div class="r" style="left:1047px;top:450px;width:49px;height:16px;background:#e6e6e6;"></div>
<div class="r" style="left:926px;top:496px;width:57px;height:23px;background:#e2e2e2;"></div><div class="r" style="left:983px;top:496px;width:57px;height:23px;background:#e7e7e7;"></div><div class="r" style="left:1040px;top:496px;width:57px;height:23px;background:#e3e3e3;"></div><div class="r" style="left:1097px;top:496px;width:41px;height:23px;background:#e5e5e5;"></div>
<div class="r" style="left:932px;top:555px;width:57px;height:24px;background:#e4e4e4;"></div><div class="r" style="left:989px;top:555px;width:57px;height:24px;background:#e9e9e9;"></div><div class="r" style="left:1046px;top:555px;width:57px;height:24px;background:#e5e5e5;"></div><div class="r" style="left:1103px;top:555px;width:38px;height:24px;background:#e7e7e7;"></div>
<div class="r" style="left:934px;top:605px;width:57px;height:17px;background:#dadada;"></div><div class="r" style="left:991px;top:605px;width:57px;height:17px;background:#dfdfdf;"></div><div class="r" style="left:1048px;top:605px;width:18px;height:17px;background:#dbdbdb;"></div>
<div class="r" style="left:931px;top:641px;width:57px;height:17px;background:#d6d6d6;"></div><div class="r" style="left:988px;top:641px;width:57px;height:17px;background:#dbdbdb;"></div><div class="r" style="left:1045px;top:641px;width:23px;height:17px;background:#d7d7d7;"></div>
<div class="r" style="left:931px;top:679px;width:57px;height:21px;background:#e4e4e4;"></div><div class="r" style="left:988px;top:679px;width:54px;height:21px;background:#e9e9e9;"></div>
<div class="r" style="left:935px;top:718px;width:57px;height:17px;background:#dedede;"></div><div class="r" style="left:992px;top:718px;width:56px;height:17px;background:#e3e3e3;"></div>
<div class="r" style="left:937px;top:761px;width:147px;height:8px;background:#f0f0f0;"></div>
<div class="r" style="left:925px;top:769px;width:170px;height:12px;background:#dadada;"></div>
<div class="r" style="left:929px;top:810px;width:57px;height:19px;background:#e0e0e0;"></div><div class="r" style="left:986px;top:810px;width:57px;height:19px;background:#e5e5e5;"></div><div class="r" style="left:1043px;top:810px;width:42px;height:19px;background:#e1e1e1;"></div>
<div class="r" style="left:1519px;top:755px;width:64px;height:64px;border-radius:50%;background:#9c33a0;box-shadow:0 2px 8px rgba(0,0,0,.18)"></div>
<svg class="r" style="left:1535px;top:769px" width="33" height="37" viewBox="0 0 33 37"><path d="M4.5 0.5h23a4 4 0 0 1 4 4v31.5l-9-4H4.5a4 4 0 0 1-4-4V4.5a4 4 0 0 1 4-4z" fill="#fff"/><path d="M6 22.5q10.5 7 21 0" fill="none" stroke="#9c33a0" stroke-width="2"/></svg>
</body></html>
